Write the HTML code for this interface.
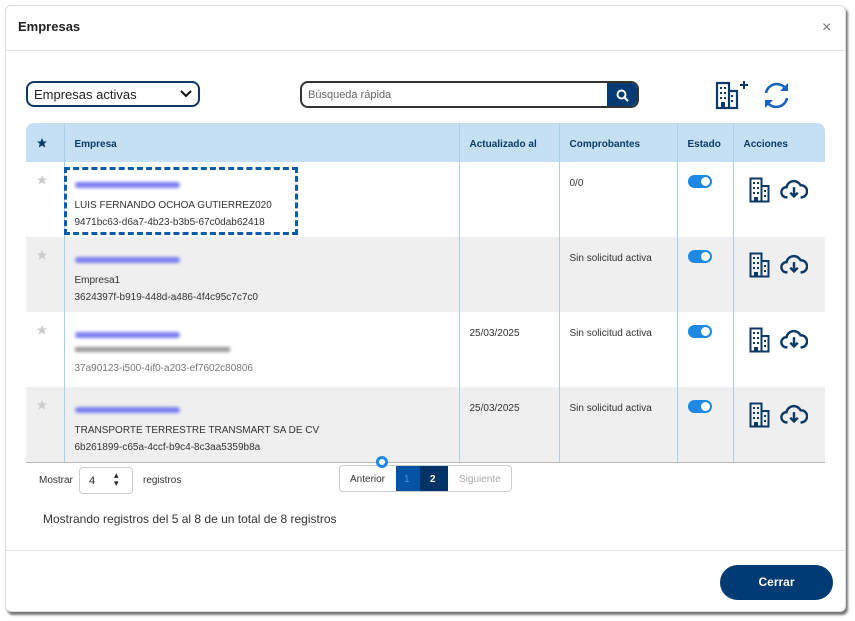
<!DOCTYPE html>
<html><head><meta charset="utf-8"><style>
*{box-sizing:border-box;margin:0;padding:0}
body{width:855px;height:621px;background:#fff;font-family:"Liberation Sans",sans-serif;position:relative;overflow:hidden;color:#222}
.modal{position:absolute;left:5px;top:5px;width:841px;height:607px;background:#fff;border-radius:6px;box-shadow:2px 3px 2px #777;border:1px solid #ddd}
.a{position:absolute}
.hdr{font-weight:bold;font-size:13px;color:#222}
.sel{left:26px;top:81px;width:174px;height:26px;border:2px solid #0b3a66;border-radius:8px;font-size:13px;padding:4px 6px;color:#222}
.search{left:300px;top:81px;width:339px;height:27px;border:2px solid #333;border-radius:8px;overflow:hidden}
.search span{position:absolute;left:6px;top:6px;font-size:11px;color:#666}
.search .btn{position:absolute;right:0;top:0;width:30px;height:25px;background:#003b73}
table{position:absolute;left:26px;top:123px;width:799px;border-collapse:collapse;font-size:10px}
th{background:#c5e0f4;height:39px;text-align:left;color:#0b3a66;font-size:10px;padding:3px 0 0 10px;border-left:1px solid #a9cfe9}
td{height:75px;vertical-align:top;padding:16px 0 0 10px;border-left:1px solid #a9cfe9;color:#333;line-height:17px}
tr.g td{background:#efefef}
tr:last-child td{border-bottom:1px solid #bbb}
.blur{display:block;width:105px;height:6px;background:#7a7ff0;border-radius:3px;filter:blur(1.5px);margin:4px 0 9px}
.tog{display:inline-block;width:24px;height:13px;background:#1e88e5;border-radius:7px;position:relative;margin-left:0}
.tog:after{content:"";position:absolute;right:2px;top:2px;width:9px;height:9px;border-radius:50%;background:#fff}
</style></head><body>
<div class="modal"></div>
<div class="a hdr" style="left:18px;top:19px">Empresas</div>
<div class="a" style="left:822px;top:19px;font-size:16px;color:#777">×</div>
<div class="a" style="left:5px;top:50px;width:841px;height:1px;background:#e3e3e3"></div>
<div class="a sel">Empresas activas<svg class="a" style="right:6px;top:7px" width="12" height="8" viewBox="0 0 12 8"><path d="M1 1l5 5 5-5" stroke="#111" stroke-width="2" fill="none"/></svg></div>
<div class="a search"><span>Búsqueda rápida</span><div class="btn"><svg style="position:absolute;left:9px;top:6px" width="13" height="13" viewBox="0 0 13 13"><circle cx="5.5" cy="5.5" r="4" stroke="#fff" stroke-width="2" fill="none"/><path d="M8.5 8.5l3.5 3.5" stroke="#fff" stroke-width="2.2"/></svg></div></div>
<svg class="a" style="left:715px;top:80px" width="35" height="30" viewBox="0 0 35 30"><rect x="2" y="3" width="12" height="25" fill="none" stroke="#0b3a66" stroke-width="2.2"/><path d="M14 11h8v17H14" fill="none" stroke="#0b3a66" stroke-width="2.2"/><g fill="#0b3a66"><rect x="5" y="7" width="2" height="2"/><rect x="9" y="7" width="2" height="2"/><rect x="5" y="12" width="2" height="2"/><rect x="9" y="12" width="2" height="2"/><rect x="5" y="17" width="2" height="2"/><rect x="9" y="17" width="2" height="2"/><rect x="16" y="15" width="2" height="2"/><rect x="16" y="20" width="2" height="2"/><rect x="6" y="22" width="4" height="6"/></g><path d="M29 1v8M25 5h8" stroke="#0b3a66" stroke-width="2"/></svg>
<svg class="a" style="left:761px;top:80px" width="31" height="31" viewBox="0 0 31 31"><path d="M5 13a11 11 0 0 1 20-4M26 18a11 11 0 0 1-20 4" fill="none" stroke="#1565c0" stroke-width="2.6"/><path d="M27 3v8h-8z M4 28v-8h8z" fill="#1565c0"/></svg>
<table>
<tr><th style="width:38px;border-left:none;border-top-left-radius:8px;padding-left:10px"><svg width="12" height="12" viewBox="0 0 24 24"><path d="M12 2l3 7h7l-5.5 4.5 2 7.5L12 17l-6.5 4 2-7.5L2 9h7z" fill="#0b3a66"/></svg></th><th style="width:395px">Empresa</th><th style="width:100px">Actualizado al</th><th style="width:118px">Comprobantes</th><th style="width:56px">Estado</th><th style="border-top-right-radius:8px">Acciones</th></tr>
<tr><td style="border-left:none;padding-top:12px"><svg width="12" height="12" viewBox="0 0 24 24"><path d="M12 2l3 7h7l-5.5 4.5 2 7.5L12 17l-6.5 4 2-7.5L2 9h7z" fill="#ccc"/></svg></td><td><span class="blur"></span>LUIS FERNANDO OCHOA GUTIERREZ020<br>9471bc63-d6a7-4b23-b3b5-67c0dab62418</td><td></td><td style="padding-top:13px">0/0</td><td style="padding-top:13px"><span class="tog"></span></td><td class="act"></td></tr>
<tr class="g"><td style="border-left:none;padding-top:12px"><svg width="12" height="12" viewBox="0 0 24 24"><path d="M12 2l3 7h7l-5.5 4.5 2 7.5L12 17l-6.5 4 2-7.5L2 9h7z" fill="#ccc"/></svg></td><td><span class="blur"></span>Empresa1<br>3624397f-b919-448d-a486-4f4c95c7c7c0</td><td></td><td style="padding-top:13px">Sin solicitud activa</td><td style="padding-top:13px"><span class="tog"></span></td><td class="act"></td></tr>
<tr><td style="border-left:none;padding-top:12px"><svg width="12" height="12" viewBox="0 0 24 24"><path d="M12 2l3 7h7l-5.5 4.5 2 7.5L12 17l-6.5 4 2-7.5L2 9h7z" fill="#ccc"/></svg></td><td><span class="blur"></span><span style="display:block;width:155px;height:5px;background:#999;filter:blur(1.5px);margin:6px 0 8px"></span><span style="color:#777">37a90123-i500-4if0-a203-ef7602c80806</span></td><td style="padding-top:13px">25/03/2025</td><td style="padding-top:13px">Sin solicitud activa</td><td style="padding-top:13px"><span class="tog"></span></td><td class="act"></td></tr>
<tr class="g"><td style="border-left:none;padding-top:12px"><svg width="12" height="12" viewBox="0 0 24 24"><path d="M12 2l3 7h7l-5.5 4.5 2 7.5L12 17l-6.5 4 2-7.5L2 9h7z" fill="#ccc"/></svg></td><td><span class="blur"></span>TRANSPORTE TERRESTRE TRANSMART SA DE CV<br>6b261899-c65a-4ccf-b9c4-8c3aa5359b8a</td><td style="padding-top:13px">25/03/2025</td><td style="padding-top:13px">Sin solicitud activa</td><td style="padding-top:13px"><span class="tog"></span></td><td class="act"></td></tr>
</table>
<div class="a" style="left:64px;top:167px;width:234px;height:68px;border:3px dashed #0b5cad"></div>
<div id="icons"></div>
<script>
var ys=[177,252,327,402],h='';
ys.forEach(function(y){h+='<svg class="a" style="left:749px;top:'+y+'px" width="22" height="26" viewBox="0 0 22 26"><rect x="1.5" y="1.5" width="11" height="23" fill="none" stroke="#0b3a66" stroke-width="2"/><path d="M12.5 9h7v15.5h-7" fill="none" stroke="#0b3a66" stroke-width="2"/><g fill="#0b3a66"><rect x="4" y="5" width="2" height="2"/><rect x="8" y="5" width="2" height="2"/><rect x="4" y="10" width="2" height="2"/><rect x="8" y="10" width="2" height="2"/><rect x="4" y="15" width="2" height="2"/><rect x="8" y="15" width="2" height="2"/><rect x="15" y="13" width="2" height="2"/><rect x="15" y="18" width="2" height="2"/><rect x="5" y="20" width="4" height="5"/></g></svg><svg class="a" style="left:780px;top:'+(y+1)+'px" width="28" height="22" viewBox="0 0 30 22"><path d="M8 20H7a5.5 5.5 0 0 1 0-11 8 8 0 0 1 15-2 6.5 6.5 0 0 1 1 13h-1" fill="none" stroke="#0b3a66" stroke-width="2.6"/><path d="M15 9v10M11 15l4 4 4-4" fill="none" stroke="#0b3a66" stroke-width="2.6"/></svg>';});
document.getElementById('icons').innerHTML=h;
</script>
<div class="a" style="left:39px;top:475px;font-size:10px;color:#333">Mostrar</div>
<div class="a" style="left:79px;top:467px;width:54px;height:27px;border:1px solid #ccc;border-radius:4px;font-size:11px;padding:7px 9px">4<span style="position:absolute;left:34px;top:3px;font-size:9px;line-height:8px">▴<br>▾</span></div>
<div class="a" style="left:143px;top:475px;font-size:10px;color:#333">registros</div>
<div class="a" style="left:339px;top:465px;width:173px;height:27px;border:1px solid #ccc;border-radius:4px;font-size:10px;overflow:hidden">
<span class="a" style="left:0;top:0;width:56px;height:25px;padding:8px 10px;color:#333">Anterior</span>
<span class="a" style="left:56px;top:0;width:24px;height:25px;background:#0653a6;color:#4a8fd9;padding:8px 8px">1</span>
<span class="a" style="left:80px;top:0;width:28px;height:25px;background:#003468;color:#fff;font-weight:bold;padding:8px 10px">2</span>
<span class="a" style="left:108px;top:0;height:25px;padding:8px 11px;color:#aaa">Siguiente</span></div>
<div class="a" style="left:376px;top:456px;width:12px;height:12px;border-radius:50%;border:3px solid #1e88e5;background:#fff"></div>
<div class="a" style="left:43px;top:512px;font-size:12px;color:#333">Mostrando registros del 5 al 8 de un total de 8 registros</div>
<div class="a" style="left:5px;top:550px;width:841px;height:1px;background:#e3e3e3"></div>
<div class="a" style="left:720px;top:565px;width:113px;height:35px;border-radius:18px;background:#003b73;color:#fff;font-weight:bold;font-size:12px;text-align:center;line-height:35px">Cerrar</div>
</body></html>
